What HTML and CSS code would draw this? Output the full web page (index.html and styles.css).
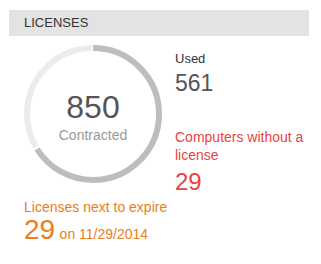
FILE: index.html
```html
<!DOCTYPE html>
<html lang="en">
<head>
    <meta charset="UTF-8">
    <meta name="viewport" content="width=device-width, initial-scale=1.0">
    <title>Licenses</title>
    <link rel="stylesheet" href="styles.css">
</head>
<body>
    <div class="card">
        <div class="card-header">LICENSES</div>

        <div class="card-body">
            <div class="gauge">
                <svg width="138" height="138" viewBox="0 0 138 138">
                    <g transform="rotate(-90 69 69)">
                        <circle class="ring-rest" cx="69" cy="69" r="66" stroke-dasharray="137 277.7" stroke-dashoffset="-275.7" />
                        <circle class="ring-used" cx="69" cy="69" r="66" stroke-dasharray="273.7 141" />
                    </g>
                </svg>
                <div class="gauge-text">
                    <div class="gauge-value">850</div>
                    <div class="gauge-label">Contracted</div>
                </div>
            </div>

            <div class="stats">
                <div class="stat-label">Used</div>
                <div class="stat-value">561</div>

                <div class="stat-label warn">Computers without a license</div>
                <div class="stat-value warn-value">29</div>
            </div>
        </div>

        <div class="expire">
            <div class="expire-label">Licenses next to expire</div>
            <div class="expire-line">
                <span class="expire-value">29</span>
                <span class="expire-date">on 11/29/2014</span>
            </div>
        </div>
    </div>
</body>
</html>
```

FILE: styles.css
```css
* {
    margin: 0;
    padding: 0;
    box-sizing: border-box;
    font-family: "Liberation Sans", Arial, sans-serif;
}

body {
    background: white;
    padding: 10px 0 0 9px;
}

.card {
    width: 300px;
}

.card-header {
    background: #e3e3e3;
    color: #333;
    font-size: 13px;
    height: 26px;
    line-height: 26px;
    padding-left: 15px;
}

.card-body {
    display: flex;
    gap: 13px;
    padding: 9px 0 0 15px;
}

.gauge {
    position: relative;
    width: 138px;
    height: 138px;
    flex-shrink: 0;
}

.gauge svg {
    display: block;
}

.gauge circle {
    fill: none;
    stroke-width: 6;
}

.ring-used {
    stroke: #bdbdbd;
}

.ring-rest {
    stroke: #ececec;
}

.gauge-text {
    position: absolute;
    top: 46px;
    left: 0;
    right: 0;
    text-align: center;
}

.gauge-value {
    font-size: 32px;
    line-height: 1;
    color: #555;
}

.gauge-label {
    font-size: 14px;
    line-height: 16px;
    margin-top: 4px;
    color: #999;
}

.stats {
    flex: 1;
    padding-top: 5px;
}

.stat-label {
    font-size: 13px;
    line-height: 18px;
    color: #333;
}

.stat-value {
    font-size: 23px;
    line-height: 1;
    margin-top: 4px;
    color: #555;
}

.stat-label.warn {
    font-size: 14px;
    margin-top: 33px;
    color: #e9433f;
}

.stat-value.warn-value {
    font-size: 24px;
    margin-top: 6px;
    color: #e9433f;
}

.expire {
    padding: 4px 0 0 15px;
    color: #ec7d1b;
}

.expire-label {
    font-size: 14px;
    line-height: 18px;
}

.expire-line {
    line-height: 1;
}

.expire-value {
    font-size: 28px;
}

.expire-date {
    font-size: 14px;
}
```
